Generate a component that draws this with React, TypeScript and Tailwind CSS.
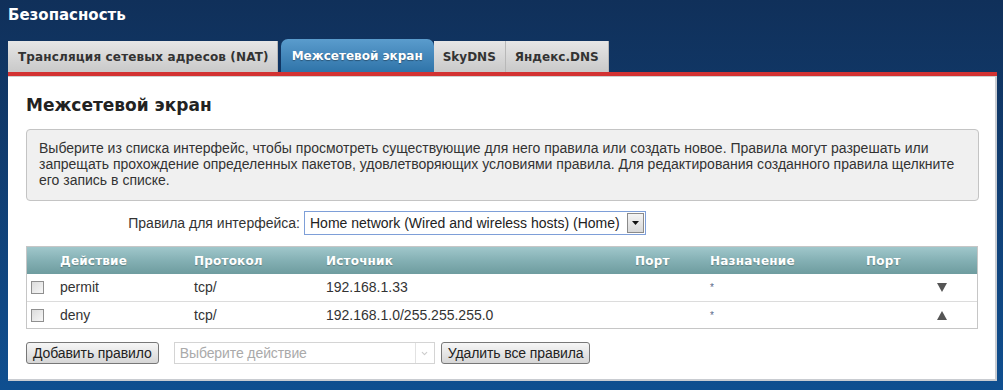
import { ChevronDown } from 'lucide-react';

const rules = [
  { action: 'permit', proto: 'tcp/', src: '192.168.1.33', srcPort: '', dst: '*', dstPort: '', arrow: 'down' },
  { action: 'deny', proto: 'tcp/', src: '192.168.1.0/255.255.255.0', srcPort: '', dst: '*', dstPort: '', arrow: 'up' },
];

const cols = 'grid grid-cols-[33px_134px_132px_309px_75px_156px_71px_1fr]';

function Tab({ label, active, wide }: { label: string; active?: boolean; wide?: boolean }) {
  if (active) {
    return (
      <div className="h-[33px] px-[11px] flex items-center rounded-t-[7px] bg-gradient-to-b from-[#5a9ccd] to-[#2f74a9] text-white font-bold text-[12px] [text-shadow:0_1px_1px_rgba(0,0,0,0.35)]">
        {label}
      </div>
    );
  }
  return (
    <div className={`h-[31px] ${wide ? 'pl-[10px] pr-[8px] tracking-[0.15px]' : 'px-[9px]'} flex items-center border-r border-[#b8b8b8] bg-gradient-to-b from-[#e6e6e6] to-[#c9c9c9] text-[#333] font-bold text-[12px]`}>
      {label}
    </div>
  );
}

export default function App() {
  return (
    <div className="w-[1003px] h-[390px] overflow-hidden bg-gradient-to-b from-[#10305a] to-[#0f4f90] font-['Liberation_Sans',Arial,sans-serif] text-[14px] text-[#333]">
      <div className="pl-[8px] pt-[4px] h-[39px] font-['DejaVu_Sans',Verdana,sans-serif] font-bold text-[15px] text-white">
        Безопасность
      </div>

      {/* tabs */}
      <div className="ml-[8px] flex items-end gap-[3px] font-['DejaVu_Sans',Verdana,sans-serif] h-[33px]">
        <Tab label="Трансляция сетевых адресов (NAT)" wide />
        <div className="flex items-end">
          <Tab label="Межсетевой экран" active />
          <Tab label="SkyDNS" />
          <Tab label="Яндекс.DNS" />
        </div>
      </div>

      <div className="ml-[8px] w-[989px] border-t-[4px] border-[#d33232]">
        <div className="bg-white border-r-2 border-b-2 border-[#c9ccd1] border-t border-t-[#d0d0d0] pl-[18px] pr-[16px] pt-[17px] pb-[14px] h-[305px]">
          <h1 className="font-['DejaVu_Sans',Verdana,sans-serif] font-bold text-[17px] text-[#222] leading-[22px]">
            Межсетевой экран
          </h1>

          <div className="mt-[13px] w-[953px] bg-[#f0f0f0] border border-[#c4c4c4] rounded-[4px] px-[12px] pt-[10px] pb-[12px] leading-[16px] text-[#333]">
            Выберите из списка интерфейс, чтобы просмотреть существующие для него правила или создать новое. Правила могут разрешать или
            запрещать прохождение определенных пакетов, удовлетворяющих условиями правила. Для редактирования созданного правила щелкните
            его запись в списке.
          </div>

          <div className="mt-[10px] flex items-center gap-[4px]">
            <span className="w-[274px] text-right">Правила для интерфейса:</span>
            <div className="h-[24px] w-[342px] border border-[#7e9fd8] flex items-center bg-white">
              <span className="flex-1 pl-[5px] text-[#222]">Home network (Wired and wireless hosts) (Home)</span>
              <div className="w-[17px] h-[20px] mr-[1px] bg-gradient-to-b from-[#f4f4f4] to-[#d8d8d8] border border-[#8a8a8a] flex items-center justify-center">
                <svg width="7" height="4" viewBox="0 0 7 4"><path d="M0 0h7L3.5 4z" fill="#111" /></svg>
              </div>
            </div>
          </div>

          {/* rules table */}
          <div className="mt-[11px] w-[952px] border border-[#c6c6c6]">
            <div className={`${cols} h-[27px] items-center bg-gradient-to-b from-[#a0c7cb] via-[#84b0b4] to-[#6e9c9f] text-white font-bold text-[12px] font-['DejaVu_Sans',Verdana,sans-serif] tracking-[0.2px] [text-shadow:0_1px_1px_rgba(0,0,0,0.25)]`}>
              <span />
              <span>Действие</span>
              <span>Протокол</span>
              <span>Источник</span>
              <span>Порт</span>
              <span>Назначение</span>
              <span>Порт</span>
              <span />
            </div>
            {rules.map((r, i) => (
              <div key={i} className={`${cols} h-[27px] items-center ${i > 0 ? 'border-t border-[#dcdcdc]' : ''}`}>
                <span className="pl-[4px] flex">
                  <span className="w-[13px] h-[13px] border border-[#8f8f8f] bg-gradient-to-br from-[#dcdcdc] to-[#f7f7f7]" />
                </span>
                <span>{r.action}</span>
                <span>{r.proto}</span>
                <span>{r.src}</span>
                <span>{r.srcPort}</span>
                <span className="text-[10px] text-[#5a6a8a] self-start pt-[6px]">{r.dst}</span>
                <span>{r.dstPort}</span>
                <span className="flex justify-end pr-[30px]">
                  {r.arrow === 'down' ? (
                    <svg width="10" height="9" viewBox="0 0 10 9"><path d="M0 0h10L5 9z" fill="#555" /></svg>
                  ) : (
                    <svg width="10" height="9" viewBox="0 0 10 9"><path d="M0 9h10L5 0z" fill="#555" /></svg>
                  )}
                </span>
              </div>
            ))}
          </div>

          <div className="mt-[13px] flex items-center">
            <button className="h-[22px] px-[6px] border border-[#777] rounded-[3px] bg-gradient-to-b from-[#f6f6f6] to-[#d6d6d6] text-[14px] text-[#222] tracking-[-0.1px]">
              Добавить правило
            </button>
            <div className="ml-[15px] h-[22px] w-[261px] border border-[#d4d4d4] flex items-center bg-white">
              <span className="flex-1 pl-[5px] text-[#aaa] tracking-[-0.1px]">Выберите действие</span>
              <div className="w-[19px] h-[20px] border-l border-[#e2e2e2] flex items-center justify-center">
                <ChevronDown size={9} className="text-[#ccc]" strokeWidth={3} />
              </div>
            </div>
            <button className="ml-[6px] h-[22px] px-[6px] border border-[#777] rounded-[3px] bg-gradient-to-b from-[#f6f6f6] to-[#d6d6d6] text-[14px] text-[#222] tracking-[-0.1px]">
              Удалить все правила
            </button>
          </div>
        </div>
      </div>
    </div>
  );
}
